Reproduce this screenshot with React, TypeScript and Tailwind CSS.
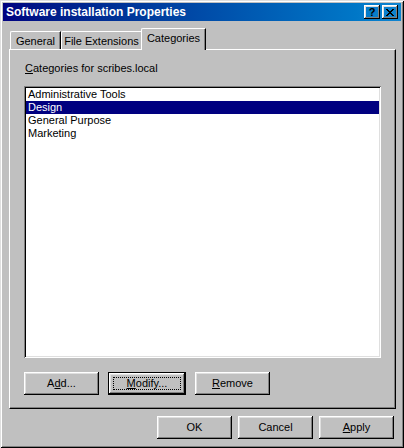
import React from "react"

const raised =
  "shadow-[inset_-1px_-1px_#000,inset_1px_1px_#fff,inset_-2px_-2px_#808080,inset_2px_2px_#dfdfdf]"

function Btn({ children, className = "", isDefault = false }: { children: React.ReactNode; className?: string; isDefault?: boolean }) {
  if (isDefault) {
    return (
      <div className={`border border-black ${className}`}>
        <div className={`h-full w-full ${raised} flex items-center justify-center p-[4px]`}>
          <div className="h-full w-full border border-dotted border-black flex items-center justify-center">
            {children}
          </div>
        </div>
      </div>
    )
  }
  return <div className={`${raised} flex items-center justify-center ${className}`}>{children}</div>
}

const items = ["Administrative Tools", "Design", "General Purpose", "Marketing"]

export default function App() {
  return (
    <div
      className="w-[404px] h-[448px] bg-[#c0c0c0] text-black text-[11px] leading-[13px] p-[3px] flex flex-col shadow-[inset_1px_1px_#dfdfdf,inset_-1px_-1px_#000,inset_2px_2px_#fff,inset_-2px_-2px_#808080]"
      style={{ fontFamily: '"Liberation Sans", Arial, sans-serif' }}
    >
      {/* title bar */}
      <div className="h-[18px] bg-gradient-to-r from-[#000080] to-[#1084d0] flex items-center pl-[3px] pr-[3px]">
        <span className="text-white font-bold text-[12px] flex-1">Software installation Properties</span>
        <div className={`w-[16px] h-[14px] ${raised} flex items-center justify-center font-bold text-[11px]`}>?</div>
        <div className={`w-[16px] h-[14px] ml-[2px] ${raised} flex items-center justify-center`}>
          <svg width="8" height="7" viewBox="0 0 8 7">
            <path d="M0 0h2v1h1v1h2V1h1V0h2v1H7v1H6v1H5v1h1v1h1v1h1v1H6V6H5V5H3v1H2v1H0V6h1V5h1V4h1V3H2V2H1V1H0z" fill="#000" />
          </svg>
        </div>
      </div>

      {/* tabs */}
      <div className="flex items-end h-[21px] mt-[7px] pl-[7px] relative z-10">
        <div className="h-[18px] w-[51px] border-l border-t border-white rounded-tl-[2px] shadow-[inset_-1px_0_#808080] border-r border-r-black flex items-center justify-center pt-[1px]">
          General
        </div>
        <div className="h-[18px] w-[80px] border-l border-t border-white rounded-tl-[2px] flex items-center justify-center pt-[1px]">
          File Extensions
        </div>
        <div className="h-[22px] -mb-px w-[65px] bg-[#c0c0c0] border-l border-t border-white rounded-tl-[2px] border-r border-r-black shadow-[inset_-1px_0_#808080] flex items-start justify-center pt-[3px]">
          Categories
        </div>
      </div>

      {/* panel */}
      <div className="ml-[6px] w-[387px] h-[360px] border-l border-t border-white border-r border-b border-r-black border-b-black shadow-[inset_-1px_-1px_#808080] flex flex-col pl-[14px] pt-[12px]">
        <div className="pl-[1px]">
          <span className="underline">C</span>ategories for scribes.local
        </div>
        <div className="mt-[11px] w-[357px] h-[272px] bg-white p-[2px] shadow-[inset_1px_1px_#808080,inset_-1px_-1px_#fff,inset_2px_2px_#000,inset_-2px_-2px_#dfdfdf]">
          {items.map((it) => (
            <div
              key={it}
              className={`h-[13px] pl-[2px] ${it === "Design" ? "bg-[#000080] text-white" : ""}`}
            >
              {it}
            </div>
          ))}
        </div>
        <div className="flex items-center mt-[14px] h-[23px]">
          <Btn className="w-[75px] h-[23px]">
            A<span className="underline">d</span>d...
          </Btn>
          <Btn isDefault className="w-[78px] h-[23px] ml-[9px]">
            <span>
              <span className="underline">M</span>odify...
            </span>
          </Btn>
          <Btn className="w-[75px] h-[23px] ml-[9px]">
            <span>
              <span className="underline">R</span>emove
            </span>
          </Btn>
        </div>
      </div>

      {/* bottom buttons */}
      <div className="flex justify-end mt-[7px] pr-[7px] gap-[6px]">
        <Btn className="w-[75px] h-[23px]">OK</Btn>
        <Btn className="w-[75px] h-[23px]">Cancel</Btn>
        <Btn className="w-[75px] h-[23px]">
          <span>
            <span className="underline">A</span>pply
          </span>
        </Btn>
      </div>
    </div>
  )
}
